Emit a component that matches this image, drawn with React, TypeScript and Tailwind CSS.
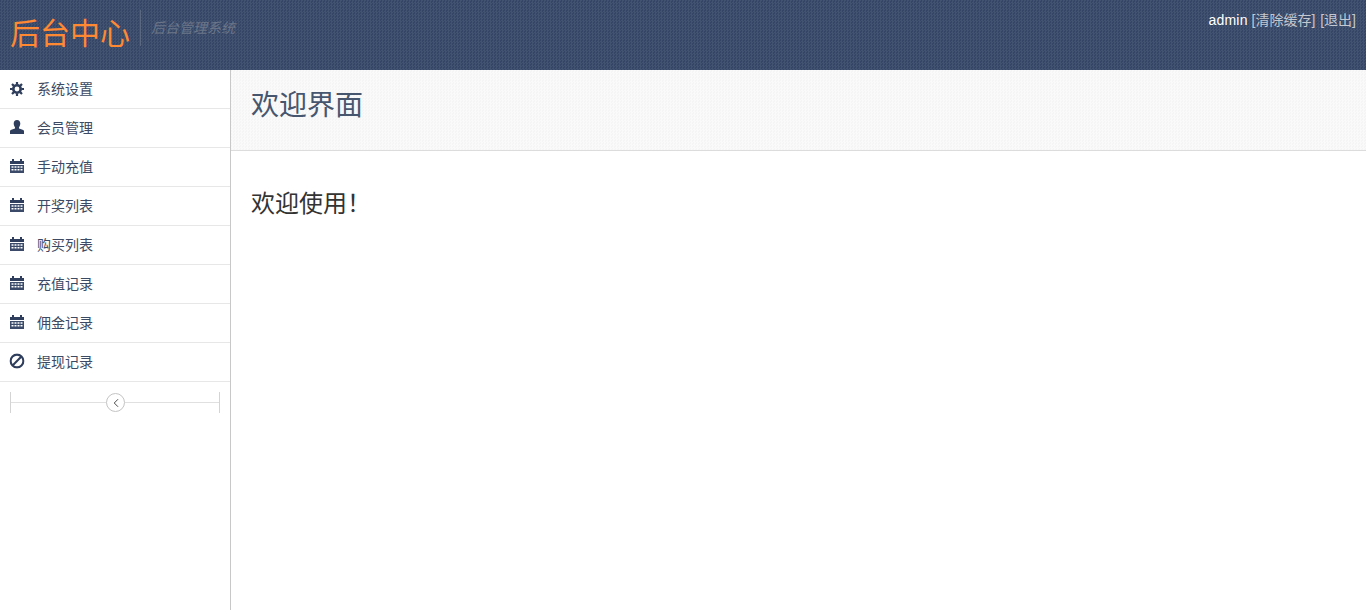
import { ChevronLeft } from "lucide-react";

const fontStack = "font-['Liberation_Sans','Noto_Sans_CJK_SC',sans-serif]";

function CogIcon() {
  return (
    <svg viewBox="0 0 14 14" className="h-[14px] w-[14px]" fill="none" stroke="#2f3e5c" aria-hidden="true">
      <circle cx="7" cy="7" r="3.700" strokeWidth="2.600" />
      <path
        strokeWidth="2.200"
        d="M7 0v2.500M7 11.500V14M0 7h2.500M11.500 7H14M2 2l1.900 1.900M10.100 10.100 12 12M12 2l-1.900 1.900M3.900 10.100 2 12"
      />
    </svg>
  );
}

function UserIcon() {
  return (
    <svg viewBox="0 0 14 14" className="h-[14px] w-[14px] -translate-y-px" fill="#2f3e5c" aria-hidden="true">
      <path d="M7 0c2.200 0 3.300 1.500 3.300 3.600 0 1.500-.6 2.900-1.300 3.600v1.400c2 .5 4.200 1.300 5 2.200V14H0v-3.200c.8-.9 3-1.700 5-2.200V7.200C4.300 6.500 3.700 5.100 3.700 3.600 3.700 1.500 4.800 0 7 0z" />
    </svg>
  );
}

function CalendarIcon() {
  return (
    <svg viewBox="0 0 14 14" className="h-[14px] w-[14px] -translate-y-px" aria-hidden="true">
      <path fill="#2f3e5c" d="M0 2h2V0h2v2h6V0h2v2h2v3H0z" />
      <path
        fill="#3a4a68"
        fillRule="evenodd"
        d="M0 6h14v8H0zM1.500 7.200v1.600h2V7.200zm3 0v1.600h2V7.200zm3 0v1.600h2V7.200zm3 0v1.600h2V7.200zm-9 2.800v1.600h2V10zm3 0v1.600h2V10zm3 0v1.600h2V10zm3 0v1.600h2V10z"
      />
    </svg>
  );
}

// the picture's ban icon has its bar running bottom-left to top-right
function BanIcon() {
  return (
    <svg viewBox="0 0 14 14" className="h-[14px] w-[14px] shrink-0 -translate-y-px scale-110" fill="none" stroke="#2f3e5c" strokeWidth="1.900" aria-hidden="true">
      <circle cx="7" cy="7" r="5.800" />
      <path d="M3 11 11 3" />
    </svg>
  );
}

const menuItems = [
  { label: "系统设置", icon: <CogIcon /> },
  { label: "会员管理", icon: <UserIcon /> },
  { label: "手动充值", icon: <CalendarIcon /> },
  { label: "开奖列表", icon: <CalendarIcon /> },
  { label: "购买列表", icon: <CalendarIcon /> },
  { label: "充值记录", icon: <CalendarIcon /> },
  { label: "佣金记录", icon: <CalendarIcon /> },
  { label: "提现记录", icon: <BanIcon /> },
];

export default function App() {
  return (
    <div className={`flex h-[610px] flex-col overflow-hidden bg-white ${fontStack}`}>
      <header className="flex h-[70px] shrink-0 justify-between bg-[#3a4b6b] bg-[conic-gradient(#425271_25%,#344565_0_50%,#425271_0_75%,#344565_0)] bg-[length:3px_3px]">
        <div className="flex items-start pl-[10px]">
          <span className="mt-[14px] text-[30px] leading-[40px] text-[#ff8833]">后台中心</span>
          <span className="mt-[10px] ml-[10px] h-[36px] w-px bg-[#5a6880]" />
          <span className="mt-[18px] ml-[10px] text-[14px] leading-[20px] text-[#6b7689] italic">后台管理系统</span>
        </div>
        <div className="pt-[10px] pr-[10px] text-[14px] leading-[20px] text-[#c4c8d0]">
          <span className="tracking-[0.2px] text-white">admin</span> [清除缓存] <span className="ml-px">[退出]</span>
        </div>
      </header>

      <div className="flex min-h-0 flex-1">
        <aside className="w-[231px] shrink-0 border-r border-[#c8c8c8] bg-white">
          <ul>
            {menuItems.map((item) => (
              <li
                key={item.label}
                className="flex h-[39px] items-center border-b border-[#e7e7e7] pl-[10px] text-[14px] text-[#3c4a63]"
              >
                <span className="mr-[13px] flex w-[14px] justify-center">{item.icon}</span>
                {item.label}
              </li>
            ))}
          </ul>
          <div className="relative mx-[10px] mt-[10px] flex h-[21px] items-center border-x border-[#d4d4d4]">
            <div className="h-px w-full bg-[#e0e0e0]" />
            <span className="absolute top-[1px] left-[95px] flex h-[19px] w-[19px] items-center justify-center rounded-full border-[1.5px] border-[#c4c4c4] bg-white">
              <ChevronLeft size={14} strokeWidth={1.3} color="#111" />
            </span>
          </div>
        </aside>

        <main className="min-w-0 flex-1">
          <div className="h-[81px] border-b border-[#dcdcdc] bg-[#f8f8f8] bg-[conic-gradient(#fafafa_25%,#f5f5f5_0_50%,#fafafa_0_75%,#f5f5f5_0)] bg-[length:3px_3px] px-[20px] pt-[17px]">
            <h1 className="text-[28px] leading-[38px] font-normal text-[#47566f]">欢迎界面</h1>
          </div>
          <div className="px-[20px] pt-[38px]">
            <p className="text-[24px] leading-[30px] text-[#333]">欢迎使用！</p>
          </div>
        </main>
      </div>
    </div>
  );
}
